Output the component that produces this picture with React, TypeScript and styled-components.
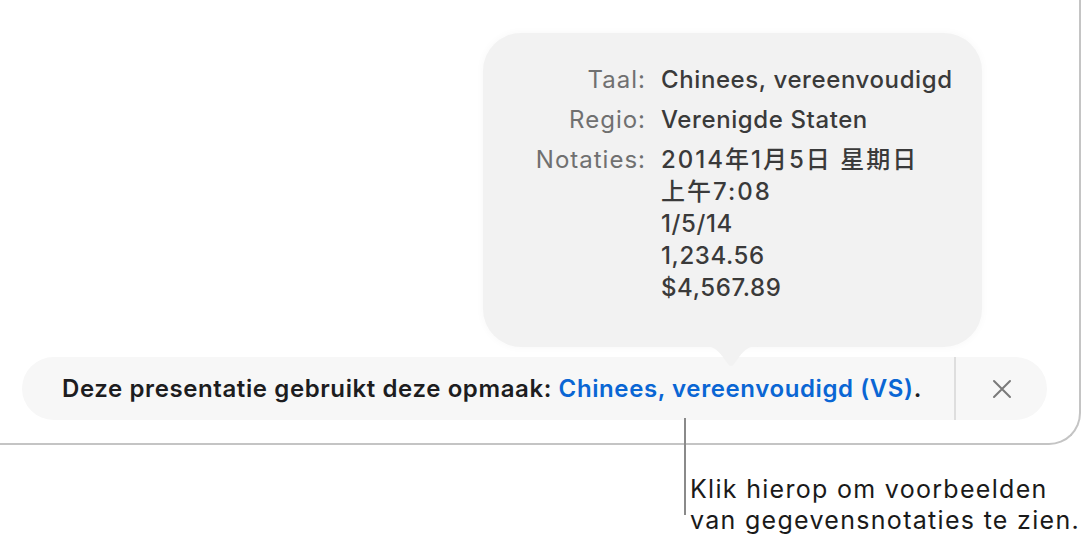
import React from "react";
import styled, { createGlobalStyle } from "styled-components";

const GlobalStyle = createGlobalStyle`
  html, body {
    margin: 0;
    background: #ffffff;
  }
  body {
    font-family: Inter, "Noto Sans CJK SC", sans-serif;
    -webkit-font-smoothing: antialiased;
  }
`;

const Page = styled.div`
  width: 1083px;
  height: 545px;
  overflow: hidden;
`;

const Window = styled.div`
  box-sizing: border-box;
  width: 1081px;
  height: 445px;
  padding: 33px 0 0 22px;
  border-right: 2px solid #c4c4c4;
  border-bottom: 2px solid #c4c4c4;
  border-bottom-right-radius: 32px;
  display: flex;
  flex-direction: column;
`;

const Popover = styled.div`
  position: relative;
  z-index: 1;
  box-sizing: border-box;
  width: 499px;
  height: 314px;
  margin-left: 461px;
  padding: 31px 0 0 52px;
  background: #f2f2f2;
  border-radius: 38px;
  box-shadow: 0 0 8px rgba(0, 0, 0, 0.035);
  display: grid;
  grid-template-columns: 111px auto;
  column-gap: 15px;
  row-gap: 8px;
  align-content: start;
`;

const Label = styled.div`
  text-align: right;
  font-size: 24px;
  line-height: 32px;
  letter-spacing: 1px;
  color: #707070;
`;

const Value = styled.div`
  display: flex;
  flex-direction: column;
  font-size: 24px;
  line-height: 32px;
  font-weight: 500;
  color: #3a3a3a;
`;

const ValueLine = styled.span<{ $cjk?: boolean }>`
  letter-spacing: ${({ $cjk }) => ($cjk ? "2px" : "0.6px")};
  white-space: nowrap;
`;

const Arrow = styled.svg`
  position: absolute;
  left: 218px;
  bottom: -21px;
  width: 60px;
  height: 22px;
`;

const Banner = styled.div`
  box-sizing: border-box;
  width: 1025px;
  height: 63px;
  margin-top: 10px;
  padding-left: 40px;
  background: #f7f7f7;
  border-radius: 32px;
  display: flex;
  align-items: center;
`;

const Message = styled.div`
  flex: 1;
  font-size: 24px;
  font-weight: 600;
  letter-spacing: 0.6px;
  color: #1d1d1f;
`;

const FormatLink = styled.span`
  color: #0a66d4;
  cursor: pointer;
`;

const Divider = styled.div`
  width: 2px;
  align-self: stretch;
  background: #dedede;
`;

const CloseButton = styled.button`
  width: 91px;
  height: 100%;
  padding: 0;
  border: none;
  background: none;
  display: flex;
  align-items: center;
  justify-content: center;
  cursor: pointer;
`;

const Callout = styled.div`
  display: flex;
  margin-left: 684px;
`;

const Leader = styled.div`
  width: 2px;
  height: 97px;
  margin-top: -27px;
  background: #8a8a8a;
`;

const CalloutText = styled.div`
  padding: 29px 0 0 4px;
  font-size: 25px;
  line-height: 31px;
  letter-spacing: 1.3px;
  color: #1a1a1a;
  white-space: pre-line;
`;

const rows = [
  { label: "Taal:", lines: ["Chinees, vereenvoudigd"] },
  { label: "Regio:", lines: ["Verenigde Staten"] },
  {
    label: "Notaties:",
    lines: ["2014年1月5日 星期日", "上午7:08", "1/5/14", "1,234.56", "$4,567.89"],
  },
];

const hasCjk = (text: string) => /[\u3000-\u9fff]/.test(text);

const App = () => {
  return (
    <Page>
      <GlobalStyle />
      <Window>
        <Popover>
          {rows.map((row) => (
            <React.Fragment key={row.label}>
              <Label>{row.label}</Label>
              <Value>
                {row.lines.map((line) => (
                  <ValueLine key={line} $cjk={hasCjk(line)}>
                    {line}
                  </ValueLine>
                ))}
              </Value>
            </React.Fragment>
          ))}
          <Arrow viewBox="0 0 60 22">
            <path
              d="M0 0 C12 0 16 3 22 11 L27 18 Q30 22 33 18 L38 11 C44 3 48 0 60 0 Z"
              fill="#f2f2f2"
            />
          </Arrow>
        </Popover>
        <Banner>
          <Message>
            Deze presentatie gebruikt deze opmaak:{" "}
            <FormatLink>Chinees, vereenvoudigd (VS)</FormatLink>.
          </Message>
          <Divider />
          <CloseButton aria-label="Sluiten">
            <svg width="20" height="20" viewBox="0 0 20 20">
              <path
                d="M2 2 L18 18 M18 2 L2 18"
                stroke="#7a7a7a"
                strokeWidth="2"
                strokeLinecap="round"
              />
            </svg>
          </CloseButton>
        </Banner>
      </Window>
      <Callout>
        <Leader />
        <CalloutText>{`Klik hierop om voorbeelden\nvan gegevensnotaties te zien.`}</CalloutText>
      </Callout>
    </Page>
  );
};

export default App;
